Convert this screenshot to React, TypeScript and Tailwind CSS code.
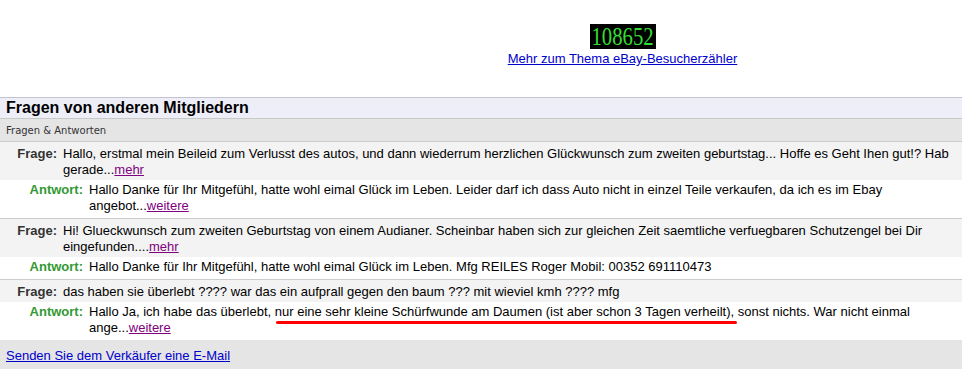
import React from 'react';

type Pair = {
  question: React.ReactNode;
  answer: React.ReactNode;
};

const linkMore = 'text-[#800080] underline';

const pairs: Pair[] = [
  {
    question: (
      <>
        Hallo, erstmal mein Beileid zum Verlusst des autos, und dann wiederrum herzlichen Glückwunsch zum zweiten geburtstag... Hoffe es Geht Ihen gut!? Hab
        <br />
        gerade...<a className={linkMore} href="#">mehr</a>
      </>
    ),
    answer: (
      <>
        Hallo Danke für Ihr Mitgefühl, hatte wohl eimal Glück im Leben. Leider darf ich dass Auto nicht in einzel Teile verkaufen, da ich es im Ebay
        <br />
        angebot...<a className={linkMore} href="#">weitere</a>
      </>
    ),
  },
  {
    question: (
      <>
        Hi! Glueckwunsch zum zweiten Geburtstag von einem Audianer. Scheinbar haben sich zur gleichen Zeit saemtliche verfuegbaren Schutzengel bei Dir
        <br />
        eingefunden....<a className={linkMore} href="#">mehr</a>
      </>
    ),
    answer: <>Hallo Danke für Ihr Mitgefühl, hatte wohl eimal Glück im Leben. Mfg REILES Roger Mobil: 00352 691110473</>,
  },
  {
    question: <>das haben sie überlebt ???? war das ein aufprall gegen den baum ??? mit wieviel kmh ???? mfg</>,
    answer: (
      <>
        Hallo Ja, ich habe das überlebt,{' '}
        <span className="relative">
          nur eine sehr kleine Schürfwunde am Daumen (ist aber schon 3 Tagen verheilt),
          {/* red marker stroke drawn over the reply */}
          <span className="absolute left-[1px] right-[-3px] bottom-[-5px] h-[3px] rounded-full bg-[#ff0000]" />
        </span>{' '}
        sonst nichts. War nicht einmal
        <br />
        ange...<a className={linkMore} href="#">weitere</a>
      </>
    ),
  },
];

function QuestionRow({ children, first }: { children: React.ReactNode; first: boolean }) {
  return (
    <div className={`flex bg-[#f3f3f3] pt-[4px] pb-[2px] ${first ? '' : 'border-t border-[#cccccc]'}`}>
      <span className="w-[57px] shrink-0 text-right font-bold text-[#333333]">Frage:</span>
      <span className="pl-[6px] text-black">{children}</span>
    </div>
  );
}

function AnswerRow({ children }: { children: React.ReactNode }) {
  return (
    <div className="flex bg-white pt-[2px] pb-[4px]">
      <span className="w-[83px] shrink-0 text-right font-bold text-[#339933]">Antwort:</span>
      <span className="pl-[6px] text-black">{children}</span>
    </div>
  );
}

export default function App() {
  return (
    <div className="w-[967px] h-[369px] overflow-hidden bg-white font-['Liberation_Sans',Arial,sans-serif] text-[13px] leading-[16px]">
      <div className="w-[962px]">
        {/* counter */}
        <div className="flex h-[97px] pt-[24px]">
          <div className="w-[283px] shrink-0" />
          <div className="flex flex-1 flex-col items-center">
            <div className="flex h-[25px] w-[66px] items-center justify-center bg-black">
              <span className="inline-block scale-x-[0.83] font-['Liberation_Serif','Times_New_Roman',serif] text-[25px] leading-[25px] text-[#33dd33]">
                108652
              </span>
            </div>
            <a href="#" className="mt-[2px] text-[#0000cc] underline">
              Mehr zum Thema eBay-Besucherzähler
            </a>
          </div>
        </div>

        {/* section header */}
        <div className="h-[22px] border-y border-t-[#c3c3d3] border-b-[#c8c8c8] bg-[#eeeef8] pl-[6px] text-[16px] font-bold leading-[20px] text-black">
          Fragen von anderen Mitgliedern
        </div>
        <div className="h-[23px] overflow-hidden border-b border-[#cccccc] bg-[#e5e5e5] pl-[6px] font-['DejaVu_Sans',Verdana,sans-serif] text-[10px] leading-[24px] text-[#333333]">
          Fragen &amp; Antworten
        </div>

        <div className="whitespace-nowrap">
          {pairs.map((p, i) => (
            <div key={i}>
              <QuestionRow first={i === 0}>{p.question}</QuestionRow>
              <AnswerRow>{p.answer}</AnswerRow>
            </div>
          ))}
        </div>

        <div className="h-[40px] bg-[#e5e5e5] pl-[6px] pt-[8px]">
          <a href="#" className="text-[#0000cc] underline">
            Senden Sie dem Verkäufer eine E-Mail
          </a>
        </div>
      </div>
    </div>
  );
}
